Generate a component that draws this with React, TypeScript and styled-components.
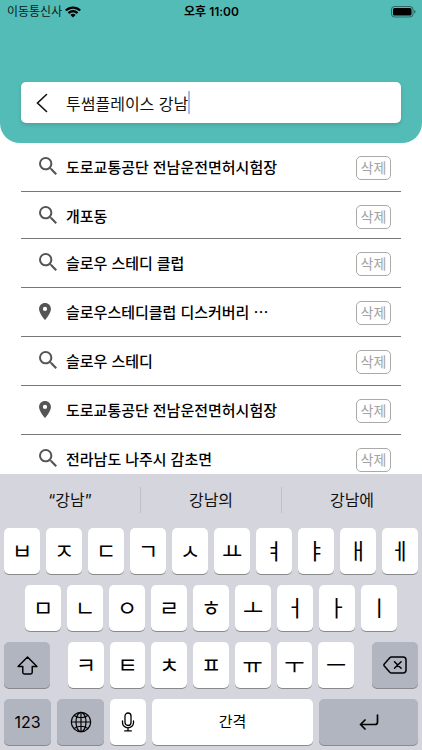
import React, { useState } from "react";
import styled, { createGlobalStyle } from "styled-components";

const GlobalStyle = createGlobalStyle`
  *, *::before, *::after { box-sizing: border-box; }
  body {
    margin: 0;
    background: #fff;
    color: #111;
    font-family: Inter, "Noto Sans CJK KR", sans-serif;
  }
  button, input { font: inherit; color: inherit; }
  button { border: 0; padding: 0; background: none; cursor: pointer; }
  svg { display: block; flex: none; }
`;

const Screen = styled.div`
  display: flex;
  flex-direction: column;
  height: 100vh;
  overflow: hidden;
`;

const Header = styled.header`
  flex: none;
  padding-bottom: 20px;
  border-radius: 0 0 20px 20px;
  background: #54bcb7;
`;

const StatusBar = styled.div`
  display: grid;
  grid-template-columns: 1fr auto 1fr;
  align-items: center;
  height: 23px;
  padding: 0 6px 0 7px;
  font-size: 12px;
  line-height: 17px;
  color: #0b1a19;
`;

const Carrier = styled.span`
  display: flex;
  align-items: center;
  gap: 3px;
`;

const Clock = styled.time`
  font-weight: 600;
  color: #000;
`;

const BatterySlot = styled.span`
  justify-self: end;
`;

const SearchBar = styled.form`
  display: flex;
  align-items: center;
  height: 41px;
  margin: 59px 21px 0;
  padding-left: 9px;
  border-radius: 5px;
  background: #fff;
  box-shadow: 0 2px 4px rgba(0, 0, 0, 0.14);
`;

const BackButton = styled.button`
  display: flex;
  align-items: center;
  justify-content: center;
  width: 24px;
  height: 40px;
  margin-right: 12px;
`;

const SearchInput = styled.input`
  field-sizing: content;
  min-width: 0;
  max-width: 100%;
  height: 24px;
  padding: 0;
  border: 0;
  outline: 0;
  background: none;
  font-size: 16px;
`;

const Caret = styled.span`
  flex: none;
  width: 2px;
  height: 23px;
  background: #a9b8ef;
`;

const History = styled.ul`
  flex: 1;
  min-height: 0;
  margin: 0;
  padding: 0 21px;
  overflow: hidden;
  list-style: none;
`;

const HistoryRow = styled.li<{ $compact?: boolean }>`
  display: flex;
  align-items: flex-start;
  height: ${(p) => (p.$compact ? 47 : 49)}px;
  padding: 13px 10px 0 18px;
  border-bottom: 1px solid #777;
`;

const IconSlot = styled.span`
  display: flex;
  align-items: center;
  width: 27px;
  height: 20px;
  color: #555;
`;

const Term = styled.a`
  flex: 1;
  min-width: 0;
  overflow: hidden;
  white-space: nowrap;
  font-size: 15px;
  line-height: 24px;
  font-weight: 500;
  color: #000;
  text-decoration: none;
`;

const DeleteButton = styled.button`
  flex: none;
  width: 35px;
  height: 24px;
  border: 1px solid #aaa;
  border-radius: 5px;
  font-size: 14px;
  line-height: 20px;
  color: #a3a3a3;
`;

const Keyboard = styled.section`
  flex: none;
  padding: 0 4px 5px;
  background: #d5d6dd;
`;

const Suggestions = styled.div`
  display: flex;
  align-items: center;
  height: 54px;
  padding-bottom: 3px;
  margin: 0 -4px;
`;

const Suggestion = styled.button`
  flex: 1;
  height: 26px;
  font-size: 16px;
  line-height: 24px;

  & + & {
    border-left: 1px solid #bfc0c6;
  }
`;

const KeyRows = styled.div`
  display: flex;
  flex-direction: column;
  gap: 11px;
`;

const KeyRow = styled.div<{ $inset?: boolean }>`
  display: flex;
  justify-content: space-between;
  gap: 6px;
  padding: 0 ${(p) => (p.$inset ? "21px" : "0")};
`;

const LetterGroup = styled.div`
  display: flex;
  flex: 1;
  gap: 6px;
  margin: 0 12px;
`;

const Key = styled.button<{ $tone?: "dark"; $width?: number; $size?: number }>`
  display: flex;
  align-items: center;
  justify-content: center;
  flex: ${(p) => (p.$width ? `0 0 ${p.$width}px` : "1 1 0")};
  min-width: 0;
  height: 46px;
  border-radius: 5px;
  background: ${(p) => (p.$tone === "dark" ? "#b1b5c0" : "#fff")};
  box-shadow: 0 1px 0 #898a8e;
  font-size: ${(p) => p.$size ?? 22}px;
  line-height: 24px;
  color: #000;
`;

const WifiIcon = () => (
  <svg width="16" height="12" viewBox="0 0 16 12" fill="#000" aria-hidden="true">
    <path d="M8 .5C5 .5 2.300 1.600.3 3.500c-.2.200-.2.400 0 .6l1 1c.2.200.4.200.6 0C3.500 3.600 5.600 2.700 8 2.700s4.500.9 6.100 2.400c.2.200.4.200.6 0l1-1c.2-.2.2-.4 0-.6C13.700 1.600 11 .5 8 .5z" />
    <path d="M8 4.100c-1.900 0-3.700.7-5 2-.2.200-.2.400 0 .6l1.100 1c.2.200.4.200.6 0C5.600 6.900 6.700 6.400 8 6.400s2.400.5 3.300 1.300c.2.200.4.200.6 0l1.100-1c.2-.2.2-.4 0-.6-1.300-1.300-3.100-2-5-2z" />
    <path d="M8 7.700c-.9 0-1.700.3-2.300.9-.2.200-.2.400 0 .6l2 2c.2.200.4.200.6 0l2-2c.2-.2.200-.4 0-.6-.6-.6-1.400-.9-2.300-.9z" />
  </svg>
);

const BatteryIcon = () => (
  <svg width="25" height="12" viewBox="0 0 25 12" aria-hidden="true">
    <rect x=".5" y=".5" width="21.500" height="10.500" rx="3" fill="none" stroke="#000" strokeOpacity=".45" />
    <rect x="2" y="2" width="18.500" height="7.500" rx="1.500" />
    <path d="M23.200 4v3.600c.8-.3 1.300-1 1.300-1.800s-.5-1.500-1.300-1.800z" fillOpacity=".5" />
  </svg>
);

const BackIcon = () => (
  <svg width="12" height="20" viewBox="0 0 12 20" fill="none" stroke="#111" strokeWidth="1.600" strokeLinecap="round" aria-hidden="true">
    <path d="M10.500 1.500 1.500 10l9 8.500" />
  </svg>
);

const SearchIcon = () => (
  <svg width="18" height="18" viewBox="3 3 17.500 17.500" fill="currentColor" aria-hidden="true">
    <path d="M15.500 14h-.79l-.28-.27A6.471 6.471 0 0 0 16 9.500 6.500 6.500 0 1 0 9.500 16c1.610 0 3.090-.59 4.230-1.570l.27.280v.790l5 4.990L20.490 19l-4.990-5zm-6 0C7.010 14 5 11.990 5 9.500S7.010 5 9.500 5 14 7.010 14 9.500 11.990 14 9.500 14z" />
  </svg>
);

const PlaceIcon = () => (
  <svg width="12" height="17" viewBox="5 2 14 20" fill="currentColor" aria-hidden="true">
    <path d="M12 2C8.130 2 5 5.130 5 9c0 5.250 7 13 7 13s7-7.750 7-13c0-3.870-3.130-7-7-7zm0 9.500a2.500 2.500 0 0 1 0-5 2.500 2.500 0 0 1 0 5z" />
  </svg>
);

const ShiftIcon = () => (
  <svg width="21" height="19" viewBox="0 0 20 18" fill="none" stroke="#000" strokeWidth="1.400" strokeLinejoin="round" aria-hidden="true">
    <path d="M10 1 1 10h4.500v5.500q0 1.500 1.500 1.500h6q1.500 0 1.500-1.500V10H19z" />
  </svg>
);

const BackspaceIcon = () => (
  <svg width="24" height="18" viewBox="0 0 24 18" fill="none" stroke="#000" strokeWidth="1.500" strokeLinecap="round" strokeLinejoin="round" aria-hidden="true">
    <path d="M8.500 1H20q3 0 3 3v10q0 3-3 3H8.500q-1 0-1.700-.8L1.300 10q-.8-1 0-2l5.500-6.200Q7.500 1 8.500 1z" />
    <path d="m11.500 5.700 6.600 6.600m0-6.600-6.600 6.600" />
  </svg>
);

const GlobeIcon = () => (
  <svg width="22" height="22" viewBox="0 0 22 22" fill="none" stroke="#000" strokeWidth="1.200" aria-hidden="true">
    <circle cx="11" cy="11" r="9.700" />
    <ellipse cx="11" cy="11" rx="5" ry="9.700" />
    <path d="M11 1.300v19.400M1.300 11h19.400M4 4.500Q11 9 18 4.500M4 17.500Q11 13 18 17.500" />
  </svg>
);

const MicIcon = () => (
  <svg width="14" height="20" viewBox="0 0 14 20" fill="none" stroke="#000" strokeWidth="1.300" strokeLinecap="round" aria-hidden="true">
    <rect x="4" y="1" width="6" height="12.500" rx="3" />
    <path d="M1.500 9v1.800a5.500 5 0 0 0 11 0V9M7 16v2.800M3.700 18.900h6.600" />
  </svg>
);

const ReturnIcon = () => (
  <svg width="20" height="16" viewBox="0 0 20 16" fill="none" stroke="#000" strokeWidth="1.700" strokeLinecap="round" strokeLinejoin="round" aria-hidden="true">
    <path d="M18.500 1v7q0 2.500-2.500 2.500H1.500M6 6l-4.500 4.500L6 15" />
  </svg>
);

type Entry = { id: number; text: string; place?: boolean; compact?: boolean };

const initialHistory: Entry[] = [
  { id: 1, text: "도로교통공단 전남운전면허시험장" },
  { id: 2, text: "개포동", compact: true },
  { id: 3, text: "슬로우 스테디 클럽" },
  { id: 4, text: "슬로우스테디클럽 디스커버리 ⋯", place: true },
  { id: 5, text: "슬로우 스테디" },
  { id: 6, text: "도로교통공단 전남운전면허시험장", place: true },
  { id: 7, text: "전라남도 나주시 감초면" },
];

const topKeys = [..."ㅂㅈㄷㄱㅅㅛㅕㅑㅐㅔ"];
const middleKeys = [..."ㅁㄴㅇㄹㅎㅗㅓㅏㅣ"];
const bottomKeys = [..."ㅋㅌㅊㅍㅠㅜㅡ"];

export default function App() {
  const [query, setQuery] = useState("투썸플레이스 강남");
  const [history, setHistory] = useState(initialHistory);
  const type = (text: string) => setQuery((q) => q + text);
  const letters = (keys: string[]) =>
    keys.map((k) => (
      <Key key={k} type="button" onClick={() => type(k)}>
        {k}
      </Key>
    ));

  return (
    <>
      <GlobalStyle />
      <Screen lang="ko">
        <Header>
          <StatusBar>
            <Carrier>
              이동통신사
              <WifiIcon />
            </Carrier>
            <Clock>오후 11:00</Clock>
            <BatterySlot>
              <BatteryIcon />
            </BatterySlot>
          </StatusBar>
          <SearchBar onSubmit={(e) => e.preventDefault()}>
            <BackButton type="button" aria-label="뒤로">
              <BackIcon />
            </BackButton>
            <SearchInput aria-label="검색" value={query} onChange={(e) => setQuery(e.target.value)} />
            <Caret />
          </SearchBar>
        </Header>

        <History>
          {history.map((entry) => (
            <HistoryRow key={entry.id} $compact={entry.compact}>
              <IconSlot>{entry.place ? <PlaceIcon /> : <SearchIcon />}</IconSlot>
              <Term href="#">{entry.text}</Term>
              <DeleteButton type="button" onClick={() => setHistory((h) => h.filter((x) => x.id !== entry.id))}>
                삭제
              </DeleteButton>
            </HistoryRow>
          ))}
        </History>

        <Keyboard aria-label="키보드">
          <Suggestions>
            <Suggestion type="button">“강남”</Suggestion>
            <Suggestion type="button">강남의</Suggestion>
            <Suggestion type="button">강남에</Suggestion>
          </Suggestions>
          <KeyRows>
            <KeyRow>{letters(topKeys)}</KeyRow>
            <KeyRow $inset>{letters(middleKeys)}</KeyRow>
            <KeyRow>
              <Key type="button" $tone="dark" $width={46} aria-label="시프트">
                <ShiftIcon />
              </Key>
              <LetterGroup>{letters(bottomKeys)}</LetterGroup>
              <Key type="button" $tone="dark" $width={46} aria-label="지우기" onClick={() => setQuery((q) => q.slice(0, -1))}>
                <BackspaceIcon />
              </Key>
            </KeyRow>
            <KeyRow>
              <Key type="button" $tone="dark" $width={47} $size={16}>
                123
              </Key>
              <Key type="button" $tone="dark" $width={47} aria-label="언어">
                <GlobeIcon />
              </Key>
              <Key type="button" $width={36} aria-label="음성 입력">
                <MicIcon />
              </Key>
              <Key type="button" $size={15} onClick={() => type(" ")}>
                간격
              </Key>
              <Key type="button" $tone="dark" $width={99} aria-label="입력">
                <ReturnIcon />
              </Key>
            </KeyRow>
          </KeyRows>
        </Keyboard>
      </Screen>
    </>
  );
}
